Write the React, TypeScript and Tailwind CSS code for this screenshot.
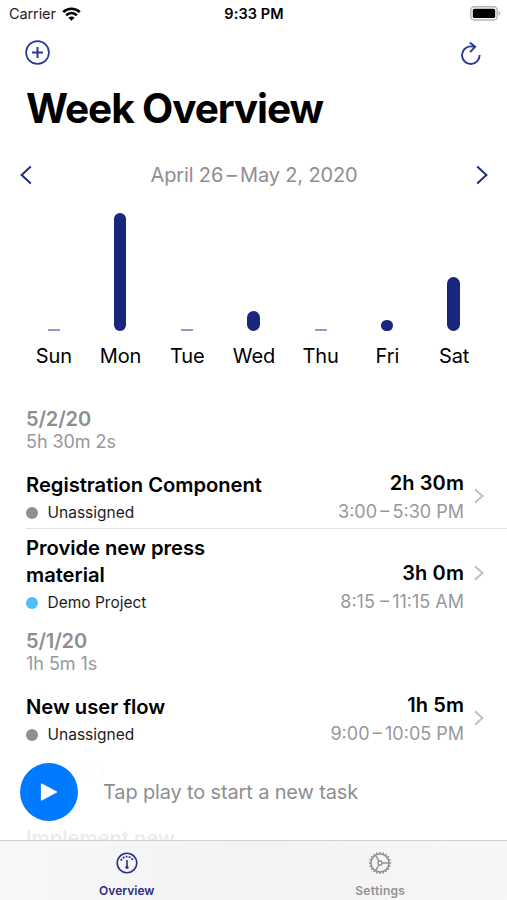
import React from 'react';

interface Task {
  title: string;
  project: string;
  color: string;
  duration: string;
  time: string;
}

interface Section {
  date: string;
  total: string;
  tasks: Task[];
}

const days = [
  { label: 'Sun', height: 0 },
  { label: 'Mon', height: 118 },
  { label: 'Tue', height: 0 },
  { label: 'Wed', height: 20 },
  { label: 'Thu', height: 0 },
  { label: 'Fri', height: 11 },
  { label: 'Sat', height: 54 },
];

const sections: Section[] = [
  {
    date: '5/2/20',
    total: '5h 30m 2s',
    tasks: [
      { title: 'Registration Component', project: 'Unassigned', color: 'bg-[#8e8e93]', duration: '2h 30m', time: '3:00\u2009–\u20095:30 PM' },
      { title: 'Provide new press material', project: 'Demo Project', color: 'bg-[#4bbffc]', duration: '3h 0m', time: '8:15 –\u200911:15 AM' },
    ],
  },
  {
    date: '5/1/20',
    total: '1h 5m 1s',
    tasks: [
      { title: 'New user flow', project: 'Unassigned', color: 'bg-[#8e8e93]', duration: '1h 5m', time: '9:00\u2009–\u200910:05 PM' },
    ],
  },
  {
    date: '4/29/20',
    total: '',
    tasks: [
      { title: 'Implement new', project: '', color: 'bg-white', duration: '', time: '' },
    ],
  },
];

function StatusBar() {
  return (
    <div className="grid h-7 shrink-0 grid-cols-3 items-center pl-[9px] pr-[6px] text-[14.5px]">
      <div className="flex items-center gap-[6px]">
        <span className="tracking-[-0.1px] text-[#222]">Carrier</span>
        <svg width="19" height="14" viewBox="0 0 19 14" fill="none" stroke="#000" strokeWidth="2.5">
          <path d="M1.2 5.2a11.8 11.8 0 0 1 16.6 0" />
          <path d="M4.1 8.3a7.6 7.6 0 0 1 10.8 0" />
          <path d="M9.5 13.8 6.4 10.7a4.4 4.4 0 0 1 6.2 0Z" fill="#000" stroke="none" />
        </svg>
      </div>
      <span className="-ml-[2px] text-center font-semibold tracking-[0.1px]">9:33 PM</span>
      <svg className="mb-px justify-self-end" width="31" height="15" viewBox="0 0 31 15">
        <rect x="0.8" y="0.8" width="26.4" height="13.2" rx="3.6" fill="#fff" stroke="#b5b5b5" strokeWidth="1.5" />
        <rect x="2.8" y="2.8" width="22.4" height="9.2" rx="1.6" fill="#000" />
        <path d="M28.6 5.2c2.2.6 2.2 3.8 0 4.4Z" fill="#b0b0b0" />
      </svg>
    </div>
  );
}

function Chart() {
  return (
    <div className="grid shrink-0 grid-cols-7 px-5 pt-[24.5px]">
      {days.map((day) => (
        <div key={day.label} className="flex flex-col items-center">
          <div className="flex h-[118px] items-end">
            {day.height > 0 ? (
              <div className="w-[12.5px] rounded-full bg-[#1a267e]" style={{ height: day.height }} />
            ) : (
              <div className="ml-px h-[1.5px] w-3 bg-[#9499c6]" />
            )}
          </div>
          <span className="mt-[12.5px] pl-px text-[20px] leading-[26px] tracking-[-0.1px]">{day.label}</span>
        </div>
      ))}
    </div>
  );
}

function TaskRow({ task, divider }: { task: Task; divider: boolean }) {
  return (
    <div className={divider ? 'ml-[26px] border-b border-[#e2e2e4]' : 'ml-[26px]'}>
      <div className="flex items-center pr-[23px] py-[5px]">
        <div className="flex flex-1 items-end justify-between">
          <div className="w-[240px]">
            <div className="text-[20.2px] font-semibold leading-[27px] tracking-[-0.03px]">{task.title}</div>
            <div className="mt-[5px] flex items-center gap-[10px]">
              <span className={`-ml-[0.5px] size-3 rounded-full ${task.color}`} />
              <span className="text-[15.5px] leading-5 text-[#1c1c1e]">{task.project}</span>
            </div>
          </div>
          <div className="text-right">
            <div className="text-[20px] font-semibold leading-[26px] tracking-[0.1px]">{task.duration}</div>
            <div className="mt-[5px] text-[18px] leading-[22px] text-[#98989c]">{task.time}</div>
          </div>
        </div>
        {task.duration && (
          <svg className="mb-px ml-[10px]" width="10" height="16" viewBox="0 0 10 16" fill="none" stroke="#c0c0c3" strokeWidth="2">
            <path d="M1 1.2 8.4 8 1 14.8" />
          </svg>
        )}
      </div>
    </div>
  );
}

function TaskList() {
  return (
    <div className="mt-[27px] shrink-0">
      {sections.map((section) => (
        <section key={section.date}>
          <div className="h-[69px] pl-[26px] pt-[11px] text-[#8e8e92]">
            <div className="text-[20px] font-semibold leading-6 tracking-[-0.15px]">{section.date}</div>
            <div className="text-[18px] leading-[22px] tracking-[-0.05px] text-[#98989c]">{section.total}</div>
          </div>
          {section.tasks.map((task, i) => (
            <TaskRow key={task.title} task={task} divider={i < section.tasks.length - 1} />
          ))}
        </section>
      ))}
    </div>
  );
}

function PlayBar() {
  return (
    <div className="absolute inset-x-0 bottom-0 flex h-[90px] items-center bg-linear-to-b from-white/98 via-white/98 to-white/92 pl-5 pb-[6px]">
      <button className="flex size-[58px] items-center justify-center rounded-full bg-[#007aff]">
        <svg width="18" height="20" viewBox="0 0 18 20">
          <path d="M1.5 2 16.5 10 1.5 18Z" fill="#fff" stroke="#fff" strokeWidth="1.2" strokeLinejoin="round" />
        </svg>
      </button>
      <span className="ml-[25px] text-[20px] tracking-[-0.15px] text-[#8e8e92]">Tap play to start a new task</span>
    </div>
  );
}

function TabBar() {
  const teeth = Array.from({ length: 20 }, (_, i) => i * 18);
  return (
    <nav className="grid h-[60px] shrink-0 grid-cols-2 border-t border-[#cfcfcf] bg-linear-to-r from-[#f8f8f8] via-[#f3f3f3] to-[#f7f7f7] pt-[11px] text-[12px] font-semibold">
      <div className="flex flex-col items-center gap-[9px] text-[#2b2f86]">
        <svg width="22" height="22" viewBox="0 0 22 22" fill="none" stroke="currentColor">
          <circle cx="11" cy="11" r="9.8" strokeWidth="1.6" />
          <path d="M5 8.6a6.5 6.5 0 0 1 12 0" strokeWidth="1.8" strokeDasharray="1.8 1.3" />
          <path d="M11 8v7" strokeWidth="1.6" />
          <circle cx="11" cy="15.3" r="1.6" fill="currentColor" stroke="none" />
        </svg>
        <span className="leading-4">Overview</span>
      </div>
      <div className="flex flex-col items-center gap-[9px] text-[#929292]">
        <svg width="24" height="24" viewBox="0 0 24 24" className="-my-px" fill="none" stroke="currentColor">
          <circle cx="12" cy="12" r="9" strokeWidth="1.5" />
          {teeth.map((a) => (
            <path key={a} d="M12 .9v2" strokeWidth="1.5" transform={`rotate(${a} 12 12)`} />
          ))}
          <circle cx="12" cy="12" r="2" strokeWidth="1.4" />
          <path d="M14 12h7M11 10.2 7.4 4M11 13.8 7.4 20" strokeWidth="1.4" />
        </svg>
        <span className="leading-4 tracking-[0.3px]">Settings</span>
      </div>
    </nav>
  );
}

function App() {
  return (
    <div className="flex h-[900px] w-[507px] flex-col overflow-hidden bg-white font-['Inter',sans-serif] text-black">
      <main className="relative flex flex-1 flex-col overflow-hidden">
        <StatusBar />
        <div className="flex h-[50px] shrink-0 items-center justify-between pl-[25px] pr-[26px]">
          <svg className="mb-[2px]" width="25" height="25" viewBox="0 0 25 25" fill="none" stroke="#2b3990" strokeWidth="1.7">
            <circle cx="12.5" cy="12.5" r="11.4" />
            <path d="M12.5 7v11M7 12.5h11" strokeWidth="2" />
          </svg>
          <svg width="20" height="24" viewBox="0 0 20 24" fill="none" stroke="#2b3990" strokeWidth="1.9">
            <path d="M18.6 14a8.8 8.8 0 1 1-8.8-8.6c1.6 0 3 .1 4.4.4" />
            <path d="m8.9 1.4 5.2 4.4-5 5.4" />
          </svg>
        </div>
        <h1 className="shrink-0 pl-[26px] text-[40.6px] font-bold leading-[62px] tracking-[-1.1px]">Week Overview</h1>
        <div className="mt-[22px] flex h-[26px] shrink-0 items-center justify-between px-5">
          <svg width="12" height="20" viewBox="0 0 12 20" fill="none" stroke="#1f2c86" strokeWidth="2">
            <path d="M10.8 1.5 1.6 10l9.2 8.5" />
          </svg>
          <span className="text-[20px] tracking-[-0.15px] text-[#8e8e92]">April 26{'\u2009'}–{'\u2009'}May 2, 2020</span>
          <svg className="-mr-px" width="12" height="20" viewBox="0 0 12 20" fill="none" stroke="#1f2c86" strokeWidth="2">
            <path d="M1.2 1.5 10.4 10l-9.2 8.5" />
          </svg>
        </div>
        <Chart />
        <TaskList />
        <PlayBar />
      </main>
      <TabBar />
    </div>
  );
}

export default App;
